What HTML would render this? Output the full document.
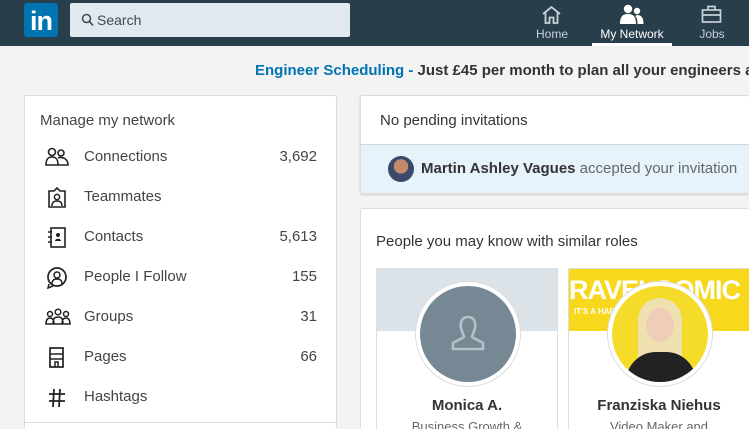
<!DOCTYPE html>
<html><head><meta charset="utf-8"><style>
*{margin:0;padding:0;box-sizing:border-box}
html,body{width:749px;height:429px;overflow:hidden}
body{background:#f3f3f3;font-family:"Liberation Sans","DejaVu Sans",sans-serif}
#w{position:relative;width:749px;height:429px;overflow:hidden}
.hdr{position:absolute;left:0;top:0;width:749px;height:46px;background:#283e4a}
.logo{position:absolute;left:24px;top:3px;width:34px;height:34px;background:#0073b1;border-radius:3px;color:#fff;font-weight:bold;font-size:27px;line-height:36px;text-align:center;letter-spacing:-1px}
.search{position:absolute;left:70px;top:3px;width:280px;height:34px;background:#e1e9ee;border-radius:2px;font-size:14px;color:#3d4a52;line-height:34px;padding-left:27px}
.nav{position:absolute;top:27px;font-size:12px;color:#c7d1d8;text-align:center}
.abs{position:absolute}
.card{position:absolute;background:#fff;border:1px solid #dcdcdc;border-radius:2px;overflow:hidden}
.row{position:absolute;left:0;width:313px;height:40px;font-size:15px;color:#444;line-height:20px}
.row .t{position:absolute;left:59px;top:0}
.row .n{position:absolute;right:21px;top:0}
.row svg{position:absolute;left:20px;top:0}
</style></head><body><div id="w">
<div class="hdr">
<div class="logo">in</div>
<div class="search"><svg class="abs" style="left:11px;top:10px" width="13" height="14" viewBox="0 0 13 14"><circle cx="5.5" cy="5.5" r="4" fill="none" stroke="#3d4a52" stroke-width="1.5"/><path d="M8.5 8.5L12 12.5" stroke="#3d4a52" stroke-width="1.6"/></svg>Search</div>
<svg class="abs" style="left:541px;top:5px" width="21" height="19" viewBox="0 0 21 19"><path d="M2 9L10.5 2L19 9M4.5 7.5V18H8.5V12.5H12.5V18H16.5V7.5" fill="none" stroke="#c7d1d8" stroke-width="1.8"/></svg>
<div class="nav" style="left:532px;width:40px">Home</div>
<svg class="abs" style="left:620px;top:4px" width="24" height="20" viewBox="0 0 24 20"><circle cx="8" cy="5" r="4.2" fill="#fff"/><path d="M0 20C0 12 3 10 8 10C13 10 16 12 16 20Z" fill="#fff"/><circle cx="17" cy="7" r="3.2" fill="#fff"/><path d="M17 11C21 11 23.5 13 23.5 20H17.5C17.5 15 16.5 13 15 12Z" fill="#fff"/></svg>
<div class="nav" style="left:592px;width:80px;color:#fff">My Network</div>
<div class="abs" style="left:592px;top:43px;width:80px;height:3px;background:#fff"></div>
<svg class="abs" style="left:701px;top:5px" width="21" height="18" viewBox="0 0 21 18"><rect x="1.5" y="5" width="18" height="12" fill="none" stroke="#c7d1d8" stroke-width="1.7"/><path d="M7 5V1.5H14V5M1.5 10H19.5" fill="none" stroke="#c7d1d8" stroke-width="1.7"/></svg>
<div class="nav" style="left:694px;width:36px">Jobs</div>
</div>
<div class="abs" style="left:255px;top:62px;font-size:15px;font-weight:bold;white-space:nowrap;color:#333"><span style="color:#0073b1">Engineer Scheduling -</span> Just £45 per month to plan all your engineers and</div>

<div class="card" style="left:24px;top:95px;width:313px;height:334px;border-bottom:none">
<div class="abs" style="left:15px;top:16px;font-size:15px;color:#444">Manage my network</div>
<div class="row" style="top:51px"><svg width="24" height="20" viewBox="0 0 24 20"><circle cx="7" cy="5" r="3.5" fill="none" stroke="#222" stroke-width="1.6"/><path d="M1 18C1 12 3 10 7 10S13 12 13 18Z" fill="none" stroke="#222" stroke-width="1.6"/><circle cx="16" cy="6" r="3" fill="none" stroke="#222" stroke-width="1.6"/><path d="M13 11C15 10 23 10 23 18H13" fill="none" stroke="#222" stroke-width="1.6"/></svg><span class="t">Connections</span><span class="n">3,692</span></div>
<div class="row" style="top:91px"><svg width="24" height="22" viewBox="0 0 24 22"><path d="M4 4H9L12 1L15 4H20V20H4Z" fill="none" stroke="#222" stroke-width="1.6"/><circle cx="12" cy="10" r="2.6" fill="none" stroke="#222" stroke-width="1.5"/><path d="M7 19C7 15 9 14 12 14S17 15 17 19" fill="none" stroke="#222" stroke-width="1.5"/></svg><span class="t">Teammates</span></div>
<div class="row" style="top:131px"><svg width="24" height="22" viewBox="0 0 24 22"><rect x="6" y="1" width="14" height="19" fill="none" stroke="#222" stroke-width="1.6"/><path d="M3 5H7M3 10H7M3 15H7" stroke="#222" stroke-width="1.6"/><circle cx="13" cy="8" r="2" fill="#222"/><path d="M10 14C10 11 16 11 16 14Z" fill="#222"/></svg><span class="t">Contacts</span><span class="n">5,613</span></div>
<div class="row" style="top:171px"><svg width="24" height="22" viewBox="0 0 24 22"><circle cx="12" cy="10" r="9" fill="none" stroke="#222" stroke-width="1.7"/><circle cx="12" cy="8" r="3" fill="none" stroke="#222" stroke-width="1.5"/><path d="M7 17C7 13 9 12 12 12S17 13 17 17M4 17L3 21L8 19" fill="none" stroke="#222" stroke-width="1.5"/></svg><span class="t">People I Follow</span><span class="n">155</span></div>
<div class="row" style="top:211px"><svg width="26" height="20" viewBox="0 0 26 20"><circle cx="5" cy="7" r="2.5" fill="none" stroke="#222" stroke-width="1.5"/><circle cx="13" cy="5" r="2.8" fill="none" stroke="#222" stroke-width="1.5"/><circle cx="21" cy="7" r="2.5" fill="none" stroke="#222" stroke-width="1.5"/><path d="M1 17C1 12 3 11 5 11S9 12 9 17ZM8 17C8 11 10 10 13 10S18 11 18 17ZM17 17C17 12 19 11 21 11S25 12 25 17Z" fill="none" stroke="#222" stroke-width="1.5"/></svg><span class="t">Groups</span><span class="n">31</span></div>
<div class="row" style="top:251px"><svg width="24" height="22" viewBox="0 0 24 22"><rect x="5" y="1" width="13" height="19" fill="none" stroke="#222" stroke-width="1.7"/><path d="M5 7H18M5 12H18M10 20V15H13V20" fill="none" stroke="#222" stroke-width="1.5"/></svg><span class="t">Pages</span><span class="n">66</span></div>
<div class="row" style="top:291px"><svg width="24" height="22" viewBox="0 0 24 22"><path d="M9 2L8 20M15 2L14 20M4 7H20M4 14H20" stroke="#222" stroke-width="1.8"/></svg><span class="t">Hashtags</span></div>
<div class="abs" style="left:0;top:326px;width:313px;height:1px;background:#ddd"></div>
</div>

<div class="card" style="left:360px;top:95px;width:389px;height:99px;box-shadow:0 1px 2px rgba(0,0,0,.15);border-right:none">
<div class="abs" style="left:19px;top:16px;font-size:15px;color:#333">No pending invitations</div>
<div class="abs" style="left:0;top:48px;width:400px;height:50px;background:#e6f3fb;border-top:1px solid #cfd8dc"></div>
<div class="abs" style="left:27px;top:60px;width:26px;height:26px;border-radius:50%;background:radial-gradient(circle at 50% 40%,#c58a6a 0 35%,#3a4a6a 36%)"></div>
<div class="abs" style="left:60px;top:64px;font-size:15px;color:#666;white-space:nowrap"><b style="color:#333">Martin Ashley Vagues</b> accepted your invitation</div>
</div>

<div class="card" style="left:360px;top:208px;width:389px;height:221px;border-right:none;border-bottom:none">
<div class="abs" style="left:15px;top:24px;font-size:15px;color:#333">People you may know with similar roles</div>
<div class="abs" style="left:15px;top:59px;width:182px;height:162px;border:1px solid #ddd;border-bottom:none;background:#fff;overflow:hidden">
<div style="height:62px;background:#dbe2e8"></div>
<div class="abs" style="left:38px;top:12px;width:106px;height:106px;border-radius:50%;background:#fff;border:1px solid #ddd"></div>
<div class="abs" style="left:43px;top:17px;width:96px;height:96px;border-radius:50%;background:#768894"></div>
<svg class="abs" style="left:70px;top:44px" width="42" height="42" viewBox="0 0 42 42"><path d="M21 4C15 4 13 9 14 15C15 20 17 22 17 24L6 30V36H36V30L25 24C25 22 27 20 28 15C29 9 27 4 21 4Z" fill="none" stroke="#b7c1c7" stroke-width="2.6" stroke-linejoin="round"/></svg>
<div class="abs" style="left:0;top:128px;width:180px;text-align:center;font-size:15px;font-weight:bold;color:#333">Monica A.</div>
<div class="abs" style="left:0;top:150px;width:180px;text-align:center;font-size:13px;color:#666">Business Growth &amp;</div>
</div>
<div class="abs" style="left:207px;top:59px;width:182px;height:162px;border:1px solid #ddd;border-bottom:none;background:#fff;overflow:hidden">
<div style="height:62px;background:#f8d81c;position:relative"><div class="abs" style="left:0;top:6px;font-size:27px;font-weight:bold;color:#fff;font-family:'Liberation Sans Narrow','Liberation Sans',sans-serif;letter-spacing:-1px">RAVELOOMIC</div><div class="abs" style="left:5px;top:38px;font-size:8px;color:#fff;font-weight:bold">IT'S A HAP</div></div>
<div class="abs" style="left:38px;top:12px;width:106px;height:106px;border-radius:50%;background:#fff;border:1px solid #ddd"></div>
<div class="abs" style="left:43px;top:17px;width:96px;height:96px;border-radius:50%;overflow:hidden;background:#f5dc2a">
<div class="abs" style="left:26px;top:12px;width:44px;height:90px;border-radius:22px 22px 6px 6px;background:#efe0b0"></div>
<div class="abs" style="left:34px;top:22px;width:28px;height:34px;border-radius:50%;background:#f0cdb6"></div>
<div class="abs" style="left:14px;top:66px;width:70px;height:40px;border-radius:30px 30px 0 0;background:#222"></div>
</div>
<div class="abs" style="left:0;top:128px;width:180px;text-align:center;font-size:15px;font-weight:bold;color:#333">Franziska Niehus</div>
<div class="abs" style="left:0;top:150px;width:180px;text-align:center;font-size:13px;color:#666">Video Maker and</div>
</div>
</div>
</div></body></html>
